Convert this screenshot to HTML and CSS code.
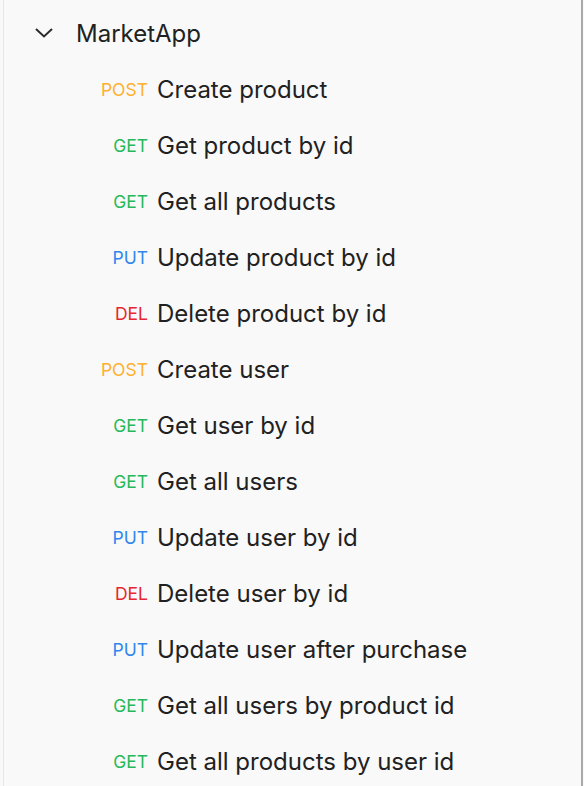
FILE: index.html
```html
<!DOCTYPE html>
<html>
<head>
<meta charset="utf-8">
<link rel="stylesheet" href="styles.css">
</head>
<body>
<div class="panel">
  <div class="folder">
    <svg class="chev" width="18" height="10" viewBox="0 0 18 10"><path d="M1 1 L9 8.5 L17 1" fill="none" stroke="#2b2b2b" stroke-width="2"/></svg>
    <span class="name">MarketApp</span>
  </div>
  <ul class="list">
    <li class="row"><span class="m post">POST</span><span class="t">Create product</span></li>
    <li class="row"><span class="m get">GET</span><span class="t">Get product by id</span></li>
    <li class="row"><span class="m get">GET</span><span class="t">Get all products</span></li>
    <li class="row"><span class="m put">PUT</span><span class="t">Update product by id</span></li>
    <li class="row"><span class="m del">DEL</span><span class="t">Delete product by id</span></li>
    <li class="row"><span class="m post">POST</span><span class="t">Create user</span></li>
    <li class="row"><span class="m get">GET</span><span class="t">Get user by id</span></li>
    <li class="row"><span class="m get">GET</span><span class="t">Get all users</span></li>
    <li class="row"><span class="m put">PUT</span><span class="t">Update user by id</span></li>
    <li class="row"><span class="m del">DEL</span><span class="t">Delete user by id</span></li>
    <li class="row"><span class="m put">PUT</span><span class="t">Update user after purchase</span></li>
    <li class="row"><span class="m get">GET</span><span class="t">Get all users by product id</span></li>
    <li class="row"><span class="m get">GET</span><span class="t">Get all products by user id</span></li>
  </ul>
</div>
</body>
</html>
```
FILE: styles.css
```css
html, body {
  margin: 0;
  padding: 0;
  background: #f9f9f9;
}
body {
  font-family: Inter, "Noto Sans", sans-serif;
  color: #212121;
}
.panel {
  margin-left: 3px;
  width: 577px;
  height: 786px;
  border-left: 1px solid #e6e6e6;
  border-right: 2px solid #a9a9a9;
  background: #f9f9f9;
  overflow: hidden;
}
.folder {
  display: flex;
  align-items: center;
  height: 56px;
  margin-top: 5px;
}
.chev {
  margin-left: 31px;
  margin-right: 23px;
}
.name {
  font-size: 24px;
}
.list {
  list-style: none;
  margin: 0;
  padding: 0;
}
.row {
  display: flex;
  align-items: center;
  height: 56px;
}
.m {
  width: 153px;
  text-align: right;
  font-size: 17.5px;
  padding-right: 9px;
  box-sizing: border-box;
  flex: none;
}
.t {
  font-size: 24px;
}
.post { color: #ffb02e; }
.get { color: #26b95a; }
.put { color: #2f86ef; }
.del { color: #e8262e; }
```
